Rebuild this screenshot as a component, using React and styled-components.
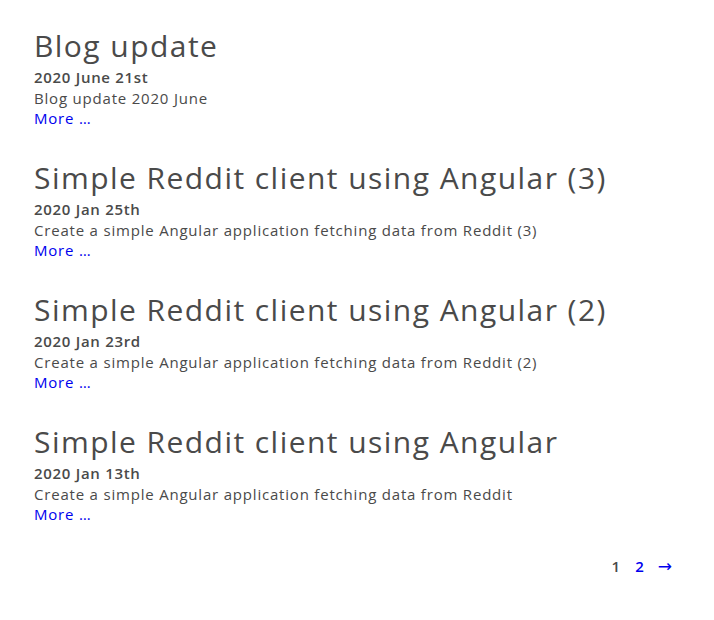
import React from "react";
import styled, { createGlobalStyle } from "styled-components";

const Global = createGlobalStyle`
  html, body { margin: 0; padding: 0; background: #fff; }
  body { font-family: "Open Sans", "Noto Sans", sans-serif; color: #4a4a4a; }
`;

const Page = styled.main`
  padding: 25px 42px 0 34px;
  display: flex;
  flex-direction: column;
`;

const PostList = styled.div`
  display: flex;
  flex-direction: column;
  gap: 28.5px;
`;

const Post = styled.article`
  display: flex;
  flex-direction: column;
`;

const Title = styled.h2`
  margin: 0;
  font-size: 30px;
  line-height: 42px;
  font-weight: 500;
  letter-spacing: 1.45px;
  color: #4a4a4a;
`;

const Date = styled.div`
  font-size: 15px;
  line-height: 20.5px;
  font-weight: 600;
  letter-spacing: 0.7px;
`;

const Desc = styled.div`
  font-size: 15px;
  line-height: 20.5px;
  font-weight: 500;
  letter-spacing: 0.8px;
`;

const More = styled.a`
  font-size: 15px;
  line-height: 20.5px;
  font-weight: 500;
  letter-spacing: 0.8px;
  color: #0000ee;
  text-decoration: none;
  align-self: flex-start;
`;

const Pager = styled.nav`
  display: flex;
  justify-content: flex-end;
  align-items: center;
  gap: 15px;
  margin-top: 31.5px;
  font-size: 15px;
  line-height: 20px;
  font-weight: 600;
`;

const PageLink = styled.a`
  color: ${(p) => (p.$current ? "#4a4a4a" : "#0000ee")};
  text-decoration: none;
`;

const Arrow = styled.a`
  color: #0000ee;
  text-decoration: none;
  font-family: "DejaVu Sans", sans-serif;
  font-size: 17px;
  font-weight: 400;
  margin-left: -1px;
`;

const posts = [
  { title: "Blog update", date: "2020 June 21st", desc: "Blog update 2020 June" },
  {
    title: "Simple Reddit client using Angular (3)",
    date: "2020 Jan 25th",
    desc: "Create a simple Angular application fetching data from Reddit (3)",
  },
  {
    title: "Simple Reddit client using Angular (2)",
    date: "2020 Jan 23rd",
    desc: "Create a simple Angular application fetching data from Reddit (2)",
  },
  {
    title: "Simple Reddit client using Angular",
    date: "2020 Jan 13th",
    desc: "Create a simple Angular application fetching data from Reddit",
  },
];

export default function App() {
  return (
    <>
      <Global />
      <Page>
        <PostList>
          {posts.map((p) => (
            <Post key={p.title}>
              <Title>{p.title}</Title>
              <Date>{p.date}</Date>
              <Desc>{p.desc}</Desc>
              <More href="#">More …</More>
            </Post>
          ))}
        </PostList>
        <Pager>
          <PageLink $current>1</PageLink>
          <PageLink href="#">2</PageLink>
          <Arrow href="#">→</Arrow>
        </Pager>
      </Page>
    </>
  );
}
